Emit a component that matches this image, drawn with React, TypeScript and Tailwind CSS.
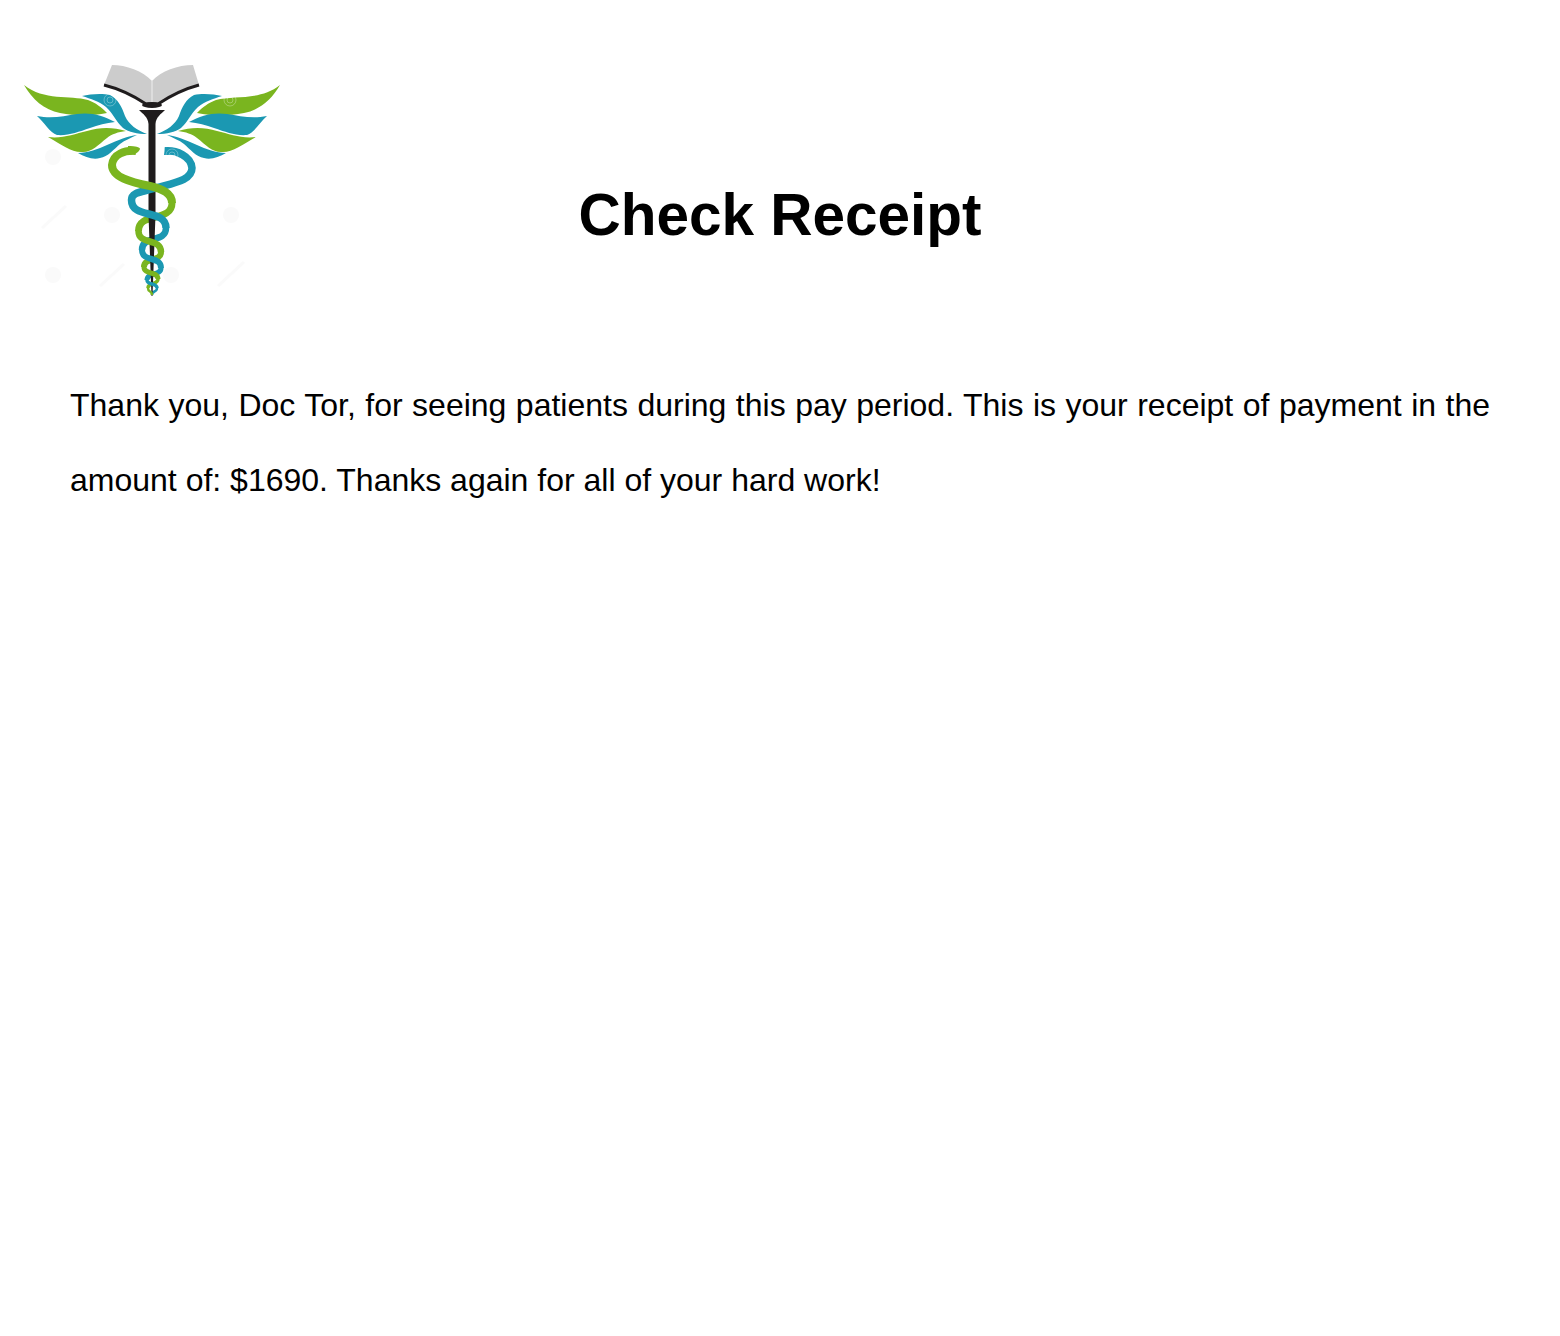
const GREEN = '#7ab51f';
const TEAL = '#1b98b2';

// feathers of the left wing, the right one is mirrored around the staff
const feathers = [
  { color: GREEN, d: 'M24 85 C32 99 44 110 60 113 C76 116 92 116 107 113 C101 107 96 103 88 100 C70 95 44 101 24 85 Z' },
  { color: TEAL, d: 'M37 116 C52 119 64 116 77 114 C90 112 103 115 115 122 C106 123 98 125 90 128 C78 132 68 136 57 135 C50 133 44 122 37 116 Z' },
  { color: GREEN, d: 'M48 137 C62 139 74 134 87 131 C100 127 113 127 126 131 C118 132 112 134 107 138 C98 145 92 152 83 152 C72 153 62 145 48 137 Z' },
  { color: TEAL, d: 'M78 153 C88 153 98 149 107 145 C118 140 128 136 137 135 C131 138 125 140 120 144 C114 149 108 157 100 158 C93 160 85 157 78 153 Z' },
  { color: TEAL, d: 'M82 96 C90 94 102 93 110 95 C118 99 122 107 125 116 C129 125 137 130 147 134 C137 134 129 132 123 128 C116 122 113 113 106 107 C99 101 91 99 82 96 Z' },
];

// extreme points of the snakes, joined with vertical tangents
const seg = (x1: number, y1: number, x2: number, y2: number) => {
  const k = (y2 - y1) * 0.7;
  return `M${x1} ${y1} C${x1} ${y1 + k} ${x2} ${y2 - k} ${x2} ${y2}`;
};

const backStrands = [
  { color: GREEN, w: 7, d: seg(172, 203, 138.5, 231) },
  { color: TEAL, w: 6.5, d: seg(166, 228, 142, 250) },
  { color: GREEN, w: 6, d: seg(161, 252, 144, 267) },
  { color: TEAL, w: 5, d: seg(161, 268, 147, 280) },
  { color: GREEN, w: 3.5, d: seg(158, 279, 148, 288) },
  { color: TEAL, w: 2.5, d: seg(157, 288, 152, 295) },
];

const frontStrands = [
  { color: TEAL, w: 7.5, d: seg(131.5, 200, 166, 228) },
  { color: GREEN, w: 6.5, d: seg(138.5, 231, 161, 252) },
  { color: TEAL, w: 6, d: seg(142, 250, 161, 268) },
  { color: GREEN, w: 5, d: seg(144, 267, 158, 279) },
  { color: TEAL, w: 3.5, d: seg(147, 280, 157, 288) },
  { color: GREEN, w: 2.5, d: seg(148, 288, 152, 295) },
];

const watermarks = [
  [53, 157],
  [112, 215],
  [231, 215],
  [53, 275],
  [171, 275],
];

const spirals = [
  [110, 100],
  [230, 100],
  [172, 155],
];

function Logo() {
  return (
    <svg viewBox="22 60 260 240" className="w-[260px] h-[240px] block">
      {/* watermark specks */}
      {watermarks.map(([x, y]) => (
        <circle key={`${x}-${y}`} cx={x} cy={y} r={8} fill="#fafafa" />
      ))}
      <path d="M42 228 L66 206 M100 286 L124 264 M218 286 L244 262" stroke="#fafafa" strokeWidth={3} />

      {/* wings */}
      {feathers.map((f) => (
        <path key={f.d} d={f.d} fill={f.color} />
      ))}
      <g transform="translate(304 0) scale(-1 1)">
        {feathers.map((f) => (
          <path key={f.d} d={f.d} fill={f.color} />
        ))}
      </g>

      {/* book */}
      <path d="M112 65 C126 65 143 71 152 81 C161 71 178 65 193 65 L199 85 C184 89 170 96 158 104 L146 104 C134 96 120 89 104 85 Z" fill="#cccccc" />
      <path d="M152 81 L152 104" stroke="#eeeeee" strokeWidth={1} />
      <path d="M104 85 C120 89 134 96 146 104 L158 104 C170 96 184 89 199 85" fill="none" stroke="#1f1c1d" strokeWidth={3} />
      <ellipse cx={152} cy={105} rx={10} ry={3} fill="#1f1c1d" />

      {/* back of the snakes, behind the staff */}
      {backStrands.map((s) => (
        <path key={s.d} d={s.d} fill="none" stroke={s.color} strokeWidth={s.w} />
      ))}

      {/* staff */}
      <path d="M139 110 L165 110 C161 114 156 117 155.5 124 L155.5 215 L152.5 296 L151.5 296 L148.5 215 L148.5 124 C148 117 143 114 139 110 Z" fill="#1f1c1d" />

      {/* upper bends with the heads */}
      <path d="M165 151 C176 150 191 156 192 168 C192 181 172 183 152 189 C142 192 131.5 192 131.5 200" fill="none" stroke={TEAL} strokeWidth={7.5} />
      <path d="M165 147 L172 149 L170 155 L164 155 Z" fill={TEAL} />
      {frontStrands.map((s) => (
        <path key={s.d} d={s.d} fill="none" stroke={s.color} strokeWidth={s.w} />
      ))}
      <path d="M136 151 C125 150 113 154 112 165 C112 177 130 182 150 186 C162 189 172 193 172 203" fill="none" stroke={GREEN} strokeWidth={8} />
      <path d="M128 146 C135 146 140 147 140 149 C139 152 135 155 128 155 Z" fill={GREEN} />

      {/* watermark rings on top of the wings */}
      {spirals.map(([x, y]) => (
        <g key={`${x}-${y}`} fill="none" stroke="#ffffff" strokeOpacity={0.3} strokeWidth={1}>
          <circle cx={x} cy={y} r={6} />
          <circle cx={x} cy={y} r={3} />
        </g>
      ))}
    </svg>
  );
}

export default function App() {
  return (
    <div className="min-h-[1336px] bg-white text-black font-['Liberation_Sans',Arial,sans-serif]">
      <header className="grid grid-cols-[1fr_auto_1fr] items-start pt-[60px]">
        <div className="pl-[22px]">
          <Logo />
        </div>
        <h1 className="mt-[120px] text-[58.5px] leading-[70px] font-bold text-center">Check Receipt</h1>
        <div />
      </header>
      <p className="mt-[68px] px-[70px] text-[32px] leading-[75px] text-justify">
        Thank you, Doc Tor, for seeing patients during this pay period. This is your receipt of payment in the amount of: $1690. Thanks again for all of your hard work!
      </p>
    </div>
  );
}
